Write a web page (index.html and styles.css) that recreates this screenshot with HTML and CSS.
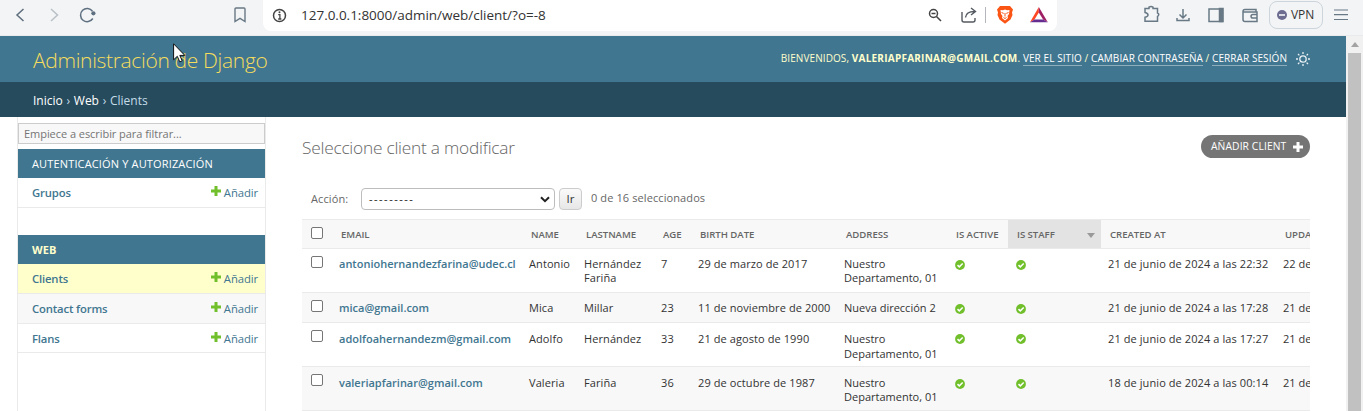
FILE: index.html
```
<!DOCTYPE html>
<html lang="es">
<head>
<meta charset="utf-8">
<title>Seleccione client a modificar | Administración de Django</title>
<link rel="stylesheet" href="styles.css">
</head>
<body>
<svg class="defs" width="0" height="0">
  <symbol id="yes" viewBox="0 0 10 10"><circle cx="5" cy="5" r="4.9" fill="#70bf2b"/><path d="M2.500 5.100 4.300 6.900 7.700 3.500" fill="none" stroke="#fff" stroke-width="1.500"/></symbol>
  <symbol id="plus" viewBox="0 0 10 10"><path d="M3.500 0h3v3.500H10v3H6.500V10h-3V6.500H0v-3h3.500z" fill="currentColor"/></symbol>
</svg>

<div class="toolbar">
  <svg class="nav-icons" width="110" height="35" viewBox="0 0 110 35" fill="none" stroke-width="1.500">
    <path d="M23.500 9 17 15l6.500 6" stroke="#5e6e7c"/>
    <path d="M51 9l6.500 6L51 21" stroke="#b9c0c6"/>
    <path d="M92.800 18.500A6.600 6.600 0 1 1 92.500 11.200" stroke="#5e7080"/>
    <circle cx="93.400" cy="13.300" r="2.100" fill="#5e7080"/>
  </svg>
  <svg class="bookmark" width="12" height="16" viewBox="0 0 12 16" fill="none" stroke="#687885" stroke-width="1.400"><path d="M2 1h8q1 0 1 1v12.500l-5-3.200-5 3.200V2q0-1 1-1z"/></svg>
  <div class="address-bar">
    <svg width="15" height="15" viewBox="0 0 15 15"><circle cx="7.500" cy="7.500" r="6" fill="none" stroke="#444" stroke-width="1.500"/><path d="M6.200 6.700h1.700V11M6.200 11h3.200" fill="none" stroke="#444" stroke-width="1.300"/><circle cx="7.500" cy="4.300" r="1" fill="#444"/></svg>
    <span class="url">127.0.0.1:8000/admin/web/client/?o=-8</span>
    <svg class="address-icons" width="125" height="30" viewBox="925 0 125 30" fill="none">
      <circle cx="933.500" cy="13.500" r="4" stroke="#444" stroke-width="1.500"/><path d="M931.500 13.500h4M936.500 16.500l4.500 4.500" stroke="#444" stroke-width="1.500"/>
      <path d="M962 12v8q0 2 2 2h9q2 0 2-2v-2M965.500 17.500q.5-6 9-6M971 8l4.500 3.500L971 15" stroke="#555b62" stroke-width="1.400"/>
      <path d="M985.500 7v16" stroke="#b3b7bb"/>
      <path d="M1000 6h10l3 3.500-1 3 .5 2.500-2 4.500-5.500 4.200-5.500-4.200-2-4.500.5-2.500-1-3z" fill="#fb5516"/>
      <path d="M1000.500 10l2.500.3 2-.8 2 .8 2.500-.3-.5 4-1.500 2 .5 2-3 2.500-3-2.500.5-2-1.500-2z" fill="#fff"/><path d="M1001.500 12.500l2.200.9M1008.500 12.500l-2.200.9M1005 13v3.500M1003.500 17.500l1.500 1 1.500-1" stroke="#fb5516"/>
      <path d="M1038.800 7 1030 22.200l4.500-2.600 4.300-7.100z" fill="#ff4724"/><path d="M1038.800 7v5.500l4.300 7.100 4.700 2.600z" fill="#9e1f63"/><path d="M1030 22.200l4.500-2.700h8.600l4.700 2.700z" fill="#662d91"/>
    </svg>
  </div>
  <svg class="tool-icons" width="120" height="30" viewBox="1140 0 120 30" fill="none" stroke="#687985" stroke-width="1.500">
    <path d="M1145 8.500h4V7.200q2-1.200 4 0v1.300h4.500V13q2.500 1 0 3.600v4.700H1145v-4q3-.8 3-2.400t-3-2.400z"/>
    <path d="M1183 9v9M1179.500 14.500l3.500 3.500 3.500-3.500M1177 18v2.500h12V18"/>
    <path d="M1209 9h13.500v12.500H1209z"/><path d="M1219.500 8.500h3.500v13h-3.500z" fill="#687985"/>
    <path d="M1256 11.500v-2h-11q-2 0-2 2v8q0 2 2 2h12v-9.500h-13.500M1257 14.500h-4q-2 0-2 1.800t2 1.800h4"/>
  </svg>
  <div class="vpn"><svg width="10" height="10" viewBox="0 0 10 10"><circle cx="5" cy="5" r="5" fill="#6c6c91"/><path d="M2 5h6" stroke="#fff" stroke-width="1.500"/></svg><span class="vpn-label">VPN</span></div>
  <svg class="menu-icon" width="14" height="12" viewBox="0 0 14 12" stroke="#687985" stroke-width="1.200"><path d="M0 1h14M0 5.700h14M0 10.500h14"/></svg>
</div>

<div class="viewport">
  <div class="page">
    <header class="site-header">
      <div class="branding">Administración de Django</div>
      <div class="user-tools"><span class="tools-text">Bienvenidos, <strong>valeriapfarinar@gmail.com</strong>. <a>Ver el sitio</a> / <a>Cambiar contraseña</a> / <a>Cerrar sesión</a></span>
        <svg width="14" height="14" viewBox="0 0 14 14" fill="none" stroke="#e8f0f4" stroke-width="1.300"><circle cx="7" cy="7" r="3.200"/><path d="M7 0v2M7 12v2M0 7h2M12 7h2M2 2l1.400 1.400M10.600 10.600 12 12M2 12l1.400-1.400M10.600 3.400 12 2"/></svg>
      </div>
    </header>
    <nav class="breadcrumbs"><span><b>Inicio</b> › <b>Web</b> › Clients</span></nav>
    <div class="main">
      <aside class="sidebar">
        <div class="filter"><span>Empiece a escribir para filtrar...</span></div>
        <section class="module">
          <h2 class="caption"><span class="auth">Autenticación y autorización</span></h2>
          <div class="model"><b>Grupos</b><a><svg width="10" height="10"><use href="#plus"/></svg><span>Añadir</span></a></div>
        </section>
        <section class="module">
          <h2 class="caption current"><span>Web</span></h2>
          <div class="model selected"><b>Clients</b><a><svg width="10" height="10"><use href="#plus"/></svg><span>Añadir</span></a></div>
          <div class="model even"><b>Contact forms</b><a><svg width="10" height="10"><use href="#plus"/></svg><span>Añadir</span></a></div>
          <div class="model last"><b>Flans</b><a><svg width="10" height="10"><use href="#plus"/></svg><span>Añadir</span></a></div>
        </section>
      </aside>
      <main class="content">
        <div class="title-row"><h1>Seleccione client a modificar</h1><a class="add-button"><span>Añadir client</span><svg width="10" height="10"><use href="#plus"/></svg></a></div>
        <div class="actions"><label>Acción:</label>
          <div class="select"><span class="dashes">---------</span><svg width="10" height="7" viewBox="0 0 10 7"><path d="M1 1.200 5 5.200l4-4" fill="none" stroke="#222" stroke-width="2"/></svg></div>
          <div class="go">Ir</div><span class="counter">0 de 16 seleccionados</span>
        </div>
        <div class="results">
          <table>
            <colgroup><col class="c-check"><col class="c-email"><col class="c-name"><col class="c-last"><col class="c-age"><col class="c-birth"><col class="c-address"><col class="c-active"><col class="c-staff"><col class="c-created"><col class="c-updated"></colgroup>
            <thead><tr><th><i class="check"></i></th><th>Email</th><th>Name</th><th>Lastname</th><th>Age</th><th>Birth date</th><th>Address</th><th>Is active</th><th class="sorted"><div>Is staff<i class="arrow"></i></div></th><th>Created at</th><th>Upda</th></tr></thead>
            <tbody>
              <tr class="tall"><td><i class="check"></i></td><td class="email">antoniohernandezfarina@udec.cl</td><td>Antonio</td><td>Hernández Fariña</td><td>7</td><td>29 de marzo de 2017</td><td>Nuestro<br>Departamento, 01</td><td><svg class="yes"><use href="#yes"/></svg></td><td><svg class="yes"><use href="#yes"/></svg></td><td>21 de junio de 2024 a las 22:32</td><td>22 de</td></tr>
              <tr class="short"><td><i class="check"></i></td><td class="email">mica@gmail.com</td><td>Mica</td><td>Millar</td><td>23</td><td>11 de noviembre de 2000</td><td>Nueva dirección 2</td><td><svg class="yes"><use href="#yes"/></svg></td><td><svg class="yes"><use href="#yes"/></svg></td><td>21 de junio de 2024 a las 17:28</td><td>21 de</td></tr>
              <tr class="tall loose"><td><i class="check"></i></td><td class="email">adolfoahernandezm@gmail.com</td><td>Adolfo</td><td>Hernández</td><td>33</td><td>21 de agosto de 1990</td><td>Nuestro<br>Departamento, 01</td><td><svg class="yes"><use href="#yes"/></svg></td><td><svg class="yes"><use href="#yes"/></svg></td><td>21 de junio de 2024 a las 17:27</td><td>21 de</td></tr>
              <tr class="tall lower"><td><i class="check"></i></td><td class="email">valeriapfarinar@gmail.com</td><td>Valeria</td><td>Fariña</td><td>36</td><td>29 de octubre de 1987</td><td>Nuestro<br>Departamento, 01</td><td><svg class="yes"><use href="#yes"/></svg></td><td><svg class="yes"><use href="#yes"/></svg></td><td>18 de junio de 2024 a las 00:14</td><td>21 de</td></tr>
            </tbody>
          </table>
        </div>
      </main>
    </div>
  </div>
  <div class="scrollbar"><i class="scroll-up"></i><div class="thumb"></div></div>
</div>
<svg class="cursor" width="13" height="20" viewBox="0 0 13 20"><path d="M.6.8v16l3.700-3.500 2.500 5.600 2.400-1.100L6.800 12.400h5z" fill="#fff" stroke="#111"/></svg>
</body>
</html>
```
FILE: styles.css
```
* { box-sizing: border-box; }
body { margin: 0; height: 411px; overflow: hidden; background: #fff; color: #333; font: 11px/14.400px "Open Sans", "Noto Sans", sans-serif; white-space: nowrap; }
svg { display: block; flex: none; }
.defs { position: absolute; }

.toolbar { display: flex; height: 36px; background: #f3f4f6; border-bottom: 1px solid #e9eaec; }
.nav-icons { margin-right: 124px; }
.bookmark { margin-top: 7px; }
.address-bar { display: flex; width: 794px; height: 31px; margin-left: 17px; padding-left: 9px; background: #fff; border-radius: 0 0 8px 8px; }
.address-bar > svg:first-child { margin-top: 8px; }
.url { width: 624px; margin: 5px 0 0 14px; color: #333; font-size: 13.500px; letter-spacing: -.01px; line-height: 20px; }
.tool-icons { margin-left: 83px; }
.vpn { display: flex; align-items: center; gap: 4px; width: 54px; height: 28px; margin: 1px 0 0 9px; padding-left: 7px; border: 1px solid #ccd5db; border-radius: 8px; }
.vpn-label { font-size: 12px; letter-spacing: -.1px; }
.menu-icon { margin: 9px 0 0 11px; }

.viewport { display: flex; height: 375px; }
.page { width: 1346px; }
.scrollbar { width: 17px; padding: 6px 2px 0; background: #f1f1f1; }
.scroll-up { display: block; width: 0; margin: 0 auto 6px; border: 4px solid transparent; border-top: 0; border-bottom: 5px solid #a3a3a3; }
.thumb { height: 370px; background: #c1c1c1; }

.site-header { display: flex; justify-content: space-between; height: 46px; padding: 0 36px 0 33px; background: #417690; color: #ffc; }
.branding { color: #f5dd5d; font-size: 21px; font-weight: 300; line-height: 49px; letter-spacing: -.33px; }
.user-tools { display: flex; gap: 9px; padding-top: 15px; font-size: 10px; letter-spacing: .08px; text-transform: uppercase; }
.user-tools a { color: #fff; border-bottom: 1px solid #8dadbc; }
.user-tools strong { letter-spacing: .24px; }
.user-tools svg { margin-top: 1px; }
.breadcrumbs { height: 35px; padding-left: 33px; background: #264b5d; color: #c4dce8; font-size: 12px; line-height: 37px; word-spacing: .6px; }
.breadcrumbs b { color: #fff; font-weight: 500; }

.main { display: flex; height: 294px; }
.sidebar { width: 249px; margin-left: 17px; padding-top: 6px; border: solid #eaeaea; border-width: 0 1px; }
.filter { height: 21px; margin-bottom: 5px; padding-left: 5px; border: 1px solid #ccc; background: #f8f8f8; color: #757575; letter-spacing: -.05px; line-height: 20px; }
.module { margin-bottom: 27px; }
.caption { height: 29px; margin: 0; padding-left: 14px; background: #417690; color: #fff; font-size: 11px; font-weight: 400; letter-spacing: .15px; line-height: 30px; text-transform: uppercase; }
.current { color: #ffc; font-weight: 700; }
.model { display: flex; justify-content: space-between; height: 30px; padding: 0 7px 0 14px; border-bottom: 1px solid #eaeaea; color: #417690; font-size: 11.300px; line-height: 30px; }
.model b { font-weight: 600; letter-spacing: -.15px; }
.model a { display: flex; gap: 3px; letter-spacing: -.1px; }
.model svg { margin-top: 8px; color: #70bf2b; }
.selected { background: #ffc; }
.even { background: #f8f8f8; }
.last { height: 29px; }

.content { width: 1008px; margin-left: 36px; }
.title-row { display: flex; justify-content: space-between; height: 71px; padding-top: 18px; }
h1 { margin: 0; color: #666; font-size: 17.300px; font-weight: 300; letter-spacing: -.23px; line-height: 26px; }
.add-button { display: flex; align-items: center; justify-content: space-between; width: 109px; height: 23px; padding: 0 7px 0 10px; border-radius: 12px; background: #757575; color: #fff; font-size: 10.300px; letter-spacing: .1px; text-transform: uppercase; }
.actions { display: flex; height: 31px; padding-left: 9px; color: #666; line-height: 22px; }
.actions label { width: 50px; letter-spacing: .1px; }
.select { display: flex; align-items: center; justify-content: space-between; width: 194px; height: 22px; padding: 0 4px 0 7px; border: 1px solid #bdbdbd; border-radius: 4px; color: #222; }
.dashes { letter-spacing: 1.500px; }
.go { width: 23px; height: 22px; margin: 0 9px 0 4px; border: 1px solid #ccc; border-radius: 4px; background: linear-gradient(#fafafa, #e7e7e7); color: #333; font-size: 11.500px; line-height: 20px; text-align: center; }
.counter { margin-top: -1px; letter-spacing: .1px; }

.results { overflow: hidden; height: 192px; }
table { width: 1008px; table-layout: fixed; border-collapse: separate; border-spacing: 0; }
.c-check { width: 30px; } .c-email { width: 190px; } .c-name { width: 55px; } .c-last { width: 77px; } .c-age { width: 37px; } .c-birth { width: 146px; } .c-address { width: 110px; } .c-active { width: 61px; } .c-staff { width: 93px; } .c-created { width: 175px; } .c-updated { width: 34px; }
th { height: 30px; padding: 2px 0 0 9px; border: solid #eaeaea; border-width: 1px 0; background: #f8f8f8; color: #666; font-size: 9.600px; font-weight: 600; letter-spacing: -.03px; text-align: left; text-transform: uppercase; }
th.sorted { background: #e3e3e3; }
.sorted div { display: flex; align-items: center; justify-content: space-between; padding-right: 6px; }
.arrow { border: 4px solid transparent; border-top: 5px solid #999; border-bottom: 0; }
td { padding: 8px 0 0 7px; border-bottom: 1px solid #eaeaea; letter-spacing: .09px; vertical-align: top; white-space: normal; }
td:nth-child(7) { letter-spacing: 0; }
td:nth-child(11) { overflow: hidden; letter-spacing: 0; }
td:nth-child(10), td:nth-child(11) { white-space: nowrap; }
.tall { height: 44px; }
.short { height: 30px; }
.loose td { line-height: 15px; }
.lower td { padding-top: 9px; line-height: 14px; }
tbody tr:nth-child(even) { background: #f8f8f8; }
td.email { color: #417690; font-weight: 600; letter-spacing: 0; }
.check { display: block; width: 12px; height: 12px; border: 1px solid #767676; border-radius: 2px; background: #fff; }
td .check { margin: -1px 0 0 2px; }
.lower .check { margin-top: -2px; }
th .check { margin-top: -5px; }
.yes { width: 10px; height: 10px; margin: 3px 0 0 1px; }
.cursor { position: absolute; left: 173px; top: 43px; }
```
